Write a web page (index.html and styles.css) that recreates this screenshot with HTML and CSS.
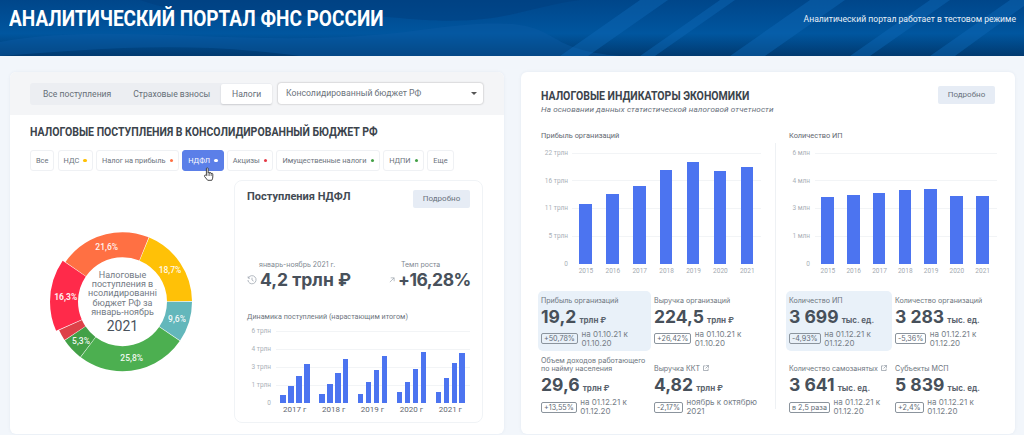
FILE: index.html
```html
<!DOCTYPE html>
<html lang="ru">
<head>
<meta charset="utf-8">
<title>Аналитический портал ФНС России</title>
<link rel="stylesheet" href="styles.css">
</head>
<body>
<header class="top">
  <svg class="top-bg" viewBox="0 0 1024 56" preserveAspectRatio="none" aria-hidden="true">
    <defs>
      <linearGradient id="hg" x1="0" y1="0" x2="0" y2="1">
        <stop offset="0" stop-color="#00468a"/><stop offset=".6" stop-color="#00569f"/><stop offset="1" stop-color="#013a70"/>
      </linearGradient>
    </defs>
    <rect width="1024" height="56" fill="url(#hg)"/>
    <path d="M0 42C120 20 260 52 420 30S520 48 620 56H300C180 40 90 50 0 56Z" fill="#0a5ba5" opacity=".45"/>
    <path d="M560 56L640 0H668L588 56ZM640 56L720 0H735L655 56ZM730 56L810 0H845L765 56ZM850 56L930 0H950L870 56ZM930 56L1010 0H1024V6L955 56Z" fill="#0d68b5" opacity=".45"/>
    <path d="M140 0C230 30 300 8 400 18S520 8 580 0Z" fill="#003d7e" opacity=".5"/>
  </svg>
  <h1 class="top-title">АНАЛИТИЧЕСКИЙ ПОРТАЛ ФНС РОССИИ</h1>
  <p class="top-note">Аналитический портал работает в тестовом режиме</p>
</header>

<main class="page">
  <section class="card card-left">
    <div class="toolbar">
      <div class="tabs">
        <span class="tab">Все поступления</span>
        <span class="tab">Страховые взносы</span>
        <span class="tab tab-active">Налоги</span>
      </div>
      <div class="select">Консолидированный бюджет РФ<i class="caret"></i></div>
    </div>
    <div class="left-body">
      <h2 class="left-title">НАЛОГОВЫЕ ПОСТУПЛЕНИЯ В КОНСОЛИДИРОВАННЫЙ БЮДЖЕТ РФ</h2>
      <div class="chips">
        <span class="chip">Все</span>
        <span class="chip">НДС<i class="dot dot-yellow"></i></span>
        <span class="chip">Налог на прибыль<i class="dot dot-orange"></i></span>
        <span class="chip chip-active">НДФЛ<i class="dot dot-white"></i>
          <svg class="hand" viewBox="0 0 12 15" aria-hidden="true"><path d="M3.4 8.6V1.7c0-1.2 1.7-1.2 1.7 0v4.2c0-1 1.6-1 1.6 0v.5c0-1 1.6-1 1.6 0v.6c0-.9 1.5-.9 1.5.1v2.9c0 1.5-.5 2.2-1 3.3H4.7L1.6 9.6c-.7-1 .5-2 1.3-1.3z" fill="#fff" stroke="#333" stroke-width=".9" stroke-linejoin="round"/><path d="M5.1 6v3M6.7 6.4v2.6M8.3 7v2" stroke="#333" stroke-width=".6"/></svg>
        </span>
        <span class="chip">Акцизы<i class="dot dot-red"></i></span>
        <span class="chip">Имущественные налоги<i class="dot dot-green"></i></span>
        <span class="chip">НДПИ<i class="dot dot-green"></i></span>
        <span class="chip">Еще</span>
      </div>
      <div class="split">
        <svg class="donut" viewBox="30 180 204 243" role="img">
          <g fill="none" stroke-width="25">
            <circle cx="122.5" cy="301.7" r="57" pathLength="100" stroke="#63b7bb" stroke-dasharray="9.45 90.55"/>
            <circle cx="122.5" cy="301.7" r="57" pathLength="100" stroke="#4caf50" stroke-dasharray="25.65 74.35" stroke-dashoffset="-9.6"/>
            <circle cx="122.5" cy="301.7" r="57" pathLength="100" stroke="#43a047" stroke-dasharray="5.15 94.85" stroke-dashoffset="-35.4"/>
            <circle cx="122.5" cy="301.7" r="57" pathLength="100" stroke="#dd4148" stroke-dasharray="2.55 97.45" stroke-dashoffset="-40.7"/>
            <circle cx="122.5" cy="301.7" r="58.5" pathLength="100" stroke="#ff2a4a" stroke-width="28" stroke-dasharray="16.15 83.85" stroke-dashoffset="-43.4"/>
            <circle cx="122.5" cy="301.7" r="57" pathLength="100" stroke="#ff7043" stroke-dasharray="21.45 78.55" stroke-dashoffset="-59.7"/>
            <circle cx="122.5" cy="301.7" r="57" pathLength="100" stroke="#ffc107" stroke-dasharray="18.55 81.45" stroke-dashoffset="-81.3"/>
          </g>
          <g class="pct">
            <text x="106.7" y="249.5">21,6%</text>
            <text x="170" y="273">18,7%</text>
            <text x="65.7" y="299.5" class="pct-strong">16,3%</text>
            <text x="177" y="322">9,6%</text>
            <text x="81" y="344">5,3%</text>
            <text x="131.7" y="361">25,8%</text>
          </g>
          <g class="center">
            <text x="122.5" y="278">Налоговые</text>
            <text x="122.5" y="287.2">поступления в</text>
            <text x="122.5" y="296.4">нсолидированні</text>
            <text x="122.5" y="305.6">бюджет РФ за</text>
            <text x="122.5" y="314.8">январь-ноябрь</text>
            <text x="122.5" y="331" class="center-year">2021</text>
          </g>
        </svg>

        <article class="inner">
          <div class="inner-head">
            <h3 class="inner-title">Поступления НДФЛ</h3>
            <span class="btn">Подробно</span>
          </div>
          <div class="kpis">
            <div class="kpi kpi-a">
              <span class="kpi-label">январь-ноябрь 2021 г.</span>
              <div class="kpi-line">
                <svg class="kpi-icon" viewBox="0 0 12 12" aria-hidden="true"><path d="M1.6 3.5A4.9 4.9 0 1 1 1.1 6M1.4 1.6v2.2h2.2M6 3.2V6l2 1.4" fill="none" stroke="#9aa3ac" stroke-width=".9"/></svg>
                <strong class="kpi-value">4,2 трлн ₽</strong>
              </div>
            </div>
            <div class="kpi kpi-b">
              <span class="kpi-label">Темп роста</span>
              <div class="kpi-line">
                <svg class="kpi-arrow" viewBox="0 0 7 7" aria-hidden="true"><path d="M1 6L6 1M2 1h4v4" fill="none" stroke="#9aa3ac" stroke-width=".8"/></svg>
                <strong class="kpi-value kpi-value-tight">+16,28%</strong>
              </div>
            </div>
          </div>
          <p class="mini-title">Динамика поступлений (нарастающим итогом)</p>
          <div class="chart chart-mini">
            <div class="plot">
              <div class="lines">
                <div class="gl"><span>6 трлн</span><i></i></div>
                <div class="gl"><span>4 трлн</span><i></i></div>
                <div class="gl"><span>3 трлн</span><i></i></div>
                <div class="gl"><span>1 трлн</span><i></i></div>
                <div class="gl"><span>0</span><i class="none"></i></div>
              </div>
              <div class="bars">
                <div class="grp"><b style="height:7.7px"></b><b style="height:17.3px"></b><b style="height:27px"></b><b style="height:39px"></b></div>
                <div class="grp"><b style="height:8.7px"></b><b style="height:19.3px"></b><b style="height:30.3px"></b><b style="height:43.7px"></b></div>
                <div class="grp"><b style="height:9.3px"></b><b style="height:21px"></b><b style="height:33px"></b><b style="height:47.3px"></b></div>
                <div class="grp"><b style="height:10.7px"></b><b style="height:21px"></b><b style="height:34px"></b><b style="height:51px"></b></div>
                <div class="grp"><b style="height:11px"></b><b style="height:25px"></b><b style="height:39.7px"></b><b style="height:49.7px"></b></div>
              </div>
            </div>
            <div class="years"><span>2017 г</span><span>2018 г</span><span>2019 г</span><span>2020 г</span><span>2021 г</span></div>
          </div>
        </article>
      </div>
    </div>
  </section>

  <section class="card card-right">
    <div class="right-head">
      <div>
        <h2 class="right-title">НАЛОГОВЫЕ ИНДИКАТОРЫ ЭКОНОМИКИ</h2>
        <p class="right-sub">На основании данных статистической налоговой отчетности</p>
      </div>
      <span class="btn">Подробно</span>
    </div>
    <div class="cols">
      <div class="col col-a">
        <p class="chart-title">Прибыль организаций</p>
        <div class="chart chart-a">
          <div class="plot">
            <div class="lines">
              <div class="gl"><span>22 трлн</span><i></i></div>
              <div class="gl"><span>16 трлн</span><i></i></div>
              <div class="gl"><span>11 трлн</span><i></i></div>
              <div class="gl"><span>5 трлн</span><i></i></div>
              <div class="gl"><span>0</span><i class="none"></i></div>
            </div>
            <div class="bars">
              <b style="height:59.3px"></b><b style="height:69.3px"></b><b style="height:77.3px"></b><b style="height:94px"></b><b style="height:101.3px"></b><b style="height:92.7px"></b><b style="height:96.3px"></b>
            </div>
          </div>
          <div class="years"><span>2015</span><span>2016</span><span>2017</span><span>2018</span><span>2019</span><span>2020</span><span>2021</span></div>
        </div>
        <div class="tiles tiles-a">
          <div class="tile tile-on">
            <p class="t-label">Прибыль организаций</p>
            <p class="t-val">19,2 <small>трлн ₽</small></p>
            <div class="t-foot"><span class="delta">+50,78%</span><span class="t-note">на 01.10.21 к 01.10.20</span></div>
          </div>
          <div class="tile">
            <p class="t-label">Выручка организаций</p>
            <p class="t-val">224,5 <small>трлн ₽</small></p>
            <div class="t-foot"><span class="delta">+26,42%</span><span class="t-note">на 01.10.21 к 01.10.20</span></div>
          </div>
          <div class="tile">
            <p class="t-label t-two">Объем доходов работающего по найму населения</p>
            <p class="t-val">29,6 <small>трлн ₽</small></p>
            <div class="t-foot"><span class="delta">+13,55%</span><span class="t-note">на 01.12.21 к 01.12.20</span></div>
          </div>
          <div class="tile">
            <p class="t-label t-two t-end">Выручка ККТ<svg class="ext" viewBox="0 0 7 7" aria-hidden="true"><path d="M3 1H.6v5.4H6V4M3.6.5h2.9v2.9M6.3.7L3 4" fill="none" stroke="#79838e" stroke-width=".7"/></svg></p>
            <p class="t-val">4,82 <small>трлн ₽</small></p>
            <div class="t-foot"><span class="delta">-2,17%</span><span class="t-note">ноябрь к октябрю 2021</span></div>
          </div>
        </div>
      </div>
      <div class="col col-b">
        <p class="chart-title">Количество ИП</p>
        <div class="chart chart-b">
          <div class="plot">
            <div class="lines">
              <div class="gl"><span>6 млн</span><i></i></div>
              <div class="gl"><span>4 млн</span><i></i></div>
              <div class="gl"><span>3 млн</span><i></i></div>
              <div class="gl"><span>1 млн</span><i></i></div>
              <div class="gl"><span>0</span><i class="none"></i></div>
            </div>
            <div class="bars">
              <b style="height:67px"></b><b style="height:68.7px"></b><b style="height:71px"></b><b style="height:73.3px"></b><b style="height:74.7px"></b><b style="height:68px"></b><b style="height:68px"></b>
            </div>
          </div>
          <div class="years"><span>2015</span><span>2016</span><span>2017</span><span>2018</span><span>2019</span><span>2020</span><span>2021</span></div>
        </div>
        <div class="tiles tiles-b">
          <div class="tile tile-on">
            <p class="t-label">Количество ИП</p>
            <p class="t-val">3 699 <small>тыс. ед.</small></p>
            <div class="t-foot"><span class="delta">-4,93%</span><span class="t-note">на 01.12.21 к 01.12.20</span></div>
          </div>
          <div class="tile">
            <p class="t-label">Количество организаций</p>
            <p class="t-val">3 283 <small>тыс. ед.</small></p>
            <div class="t-foot"><span class="delta">-5,36%</span><span class="t-note">на 01.12.21 к 01.12.20</span></div>
          </div>
          <div class="tile">
            <p class="t-label t-two t-end">Количество самозанятых<svg class="ext" viewBox="0 0 7 7" aria-hidden="true"><path d="M3 1H.6v5.4H6V4M3.6.5h2.9v2.9M6.3.7L3 4" fill="none" stroke="#79838e" stroke-width=".7"/></svg></p>
            <p class="t-val">3 641 <small>тыс. ед.</small></p>
            <div class="t-foot"><span class="delta">в 2,5 раза</span><span class="t-note">на 01.12.21 к 01.12.20</span></div>
          </div>
          <div class="tile">
            <p class="t-label t-two t-end">Субъекты МСП</p>
            <p class="t-val">5 839 <small>тыс. ед.</small></p>
            <div class="t-foot"><span class="delta">+2,4%</span><span class="t-note">на 01.12.21 к 01.12.20</span></div>
          </div>
        </div>
      </div>
    </div>
  </section>
</main>
</body>
</html>
```

FILE: styles.css
```css
* { box-sizing: border-box; }
html, body { margin: 0; height: 435px; overflow: hidden; }
body { background: #f2f6fb; font-family: Roboto, "Liberation Sans", sans-serif; color: #5f6973; }
h1, h2, h3, p { margin: 0; }
i { font-style: normal; }

.top { position: relative; height: 56px; display: flex; justify-content: space-between; padding: 0 8px 0 9px; color: #fff; overflow: hidden; }
.top-bg { position: absolute; inset: 0; width: 100%; height: 100%; }
.top-title { position: relative; font-size: 22px; line-height: 24px; margin-top: 7px; font-weight: 700; white-space: nowrap; transform: scaleX(.865); transform-origin: left center; }
.top-note { position: relative; font-size: 8.6px; line-height: 12px; margin-top: 13px; color: #e8f0f8; white-space: nowrap; }

.page { display: flex; gap: 17px; padding: 16px 9px 0 10px; }
.card { width: 494px; height: 362px; background: #fff; border-radius: 6px; overflow: hidden; box-shadow: 0 0 3px rgba(120,140,170,.12); }

.toolbar { height: 43px; background: #f4f5f7; display: flex; gap: 6px; padding: 11px 21px 0 20px; }
.tabs { display: flex; flex: none; height: 22px; width: 242px; background: #eceef2; border-radius: 3px; font-size: 8.6px; padding-left: 13px; align-items: center; color: #666e77; }
.tab { margin-right: 22px; white-space: nowrap; flex: none; }
.tab-active { margin: 0 0 0 -11px; background: #fff; height: 20px; width: 51px; text-align: center; line-height: 20px; border-radius: 2px; box-shadow: 0 1px 2px rgba(0,0,0,.14); }
.select { position: relative; flex: none; width: 205px; height: 21px; background: #fff; border-radius: 3px; box-shadow: 0 0 2px rgba(0,0,0,.35); font-size: 8.7px; line-height: 21px; padding-left: 8px; color: #6a727b; }
.caret { position: absolute; right: 6px; top: 9px; border: 3px solid transparent; border-top: 3px solid #555; border-bottom: 0; }

.left-body { padding: 0 20px; }
.left-title { font-size: 12.5px; line-height: 14px; margin-top: 10px; font-weight: 700; color: #3c444c; white-space: nowrap; transform: scaleX(.843); transform-origin: left center; }
.chips { display: flex; gap: 3.2px; margin-top: 11px; height: 21px; }
.chip { position: relative; display: flex; align-items: center; flex: none; height: 21px; padding: 0 5px; font-size: 7.4px; background: #fff; border: 1px solid #eff1f4; border-radius: 3px; white-space: nowrap; color: #6b737c; }
.chip-active { background: #5b7fe8; border-color: #5b7fe8; color: #fff; }
.dot { width: 3.5px; height: 3.5px; border-radius: 50%; margin-left: 4px; }
.dot-yellow { background: #ffc107; }
.dot-orange { background: #ff7043; }
.dot-red { background: #e53945; }
.dot-green { background: #43a047; }
.dot-white { background: #fff; }
.hand { position: absolute; left: 20px; top: 16px; width: 12px; height: 15px; }

.split { display: flex; margin-top: 9px; }
.donut { flex: none; width: 204px; height: 243px; }
.pct text { font-size: 8.5px; fill: #fff; text-anchor: middle; opacity: .92; font-weight: 500; }
.pct .pct-strong { font-weight: 700; }
.center text { font-size: 9px; fill: #727a84; text-anchor: middle; }
.center .center-year { font-size: 14px; fill: #4a525c; }

.inner { width: 249px; height: 243px; border: 1px solid #f0f3f6; border-radius: 8px; padding: 9px 12px; }
.inner-head { display: flex; justify-content: space-between; }
.inner-title { font-size: 11px; line-height: 14px; font-weight: 700; color: #434b54; white-space: nowrap; }
.btn { width: 57px; height: 18px; background: #e6ecf5; border-radius: 2px; font-size: 8px; line-height: 18px; text-align: center; color: #69727c; flex: none; }

.kpis { display: flex; margin-top: 52px; font-family: Inter, Roboto, sans-serif; }
.kpi-a { width: 142px; flex: none; }
.kpi-label { display: block; font-size: 7px; line-height: 9px; color: #808891; white-space: nowrap; }
.kpi-a .kpi-label { margin-left: 12px; }
.kpi-b .kpi-label { margin-left: 12px; }
.kpi-line { display: flex; align-items: center; gap: 3px; height: 21px; }
.kpi-icon { width: 10px; height: 10px; flex: none; }
.kpi-arrow { width: 6px; height: 6px; flex: none; }
.kpi-value { font-size: 17.5px; font-weight: 700; color: #48515b; white-space: nowrap; }
.kpi-value-tight { letter-spacing: -.5px; }

.mini-title { font-size: 7.2px; line-height: 10px; margin-top: 22px; color: #6d757e; white-space: nowrap; }

.plot { display: grid; }
.lines, .bars { grid-area: 1 / 1; }
.lines { display: flex; flex-direction: column; justify-content: space-between; }
.gl { display: flex; align-items: center; height: 0; }
.gl span { text-align: right; font-size: 6.5px; color: #aab0b7; white-space: nowrap; }
.gl i { flex: 1; height: 1px; background: #f2f4f6; }
.gl i.none { background: transparent; }
.bars { display: flex; align-items: flex-end; }
.bars b { display: block; background: #4c74f0; }
.years { display: flex; font-size: 6.5px; color: #a3a9b0; }
.years span { text-align: center; flex: none; }

.chart-mini { margin-top: 9px; }
.chart-mini .plot { height: 72px; }
.chart-mini .gl span { width: 24px; margin-right: 5px; }
.chart-mini .bars { padding-left: 33px; gap: 9.3px; }
.grp { display: flex; align-items: flex-end; gap: 2.3px; height: 100%; width: 29.6px; flex: none; }
.grp b { width: 5.7px; }
.chart-mini .years { padding-left: 28.3px; font-size: 8px; color: #5f6770; margin-top: 1px; line-height: 12px; }
.chart-mini .years span { width: 38.9px; }

.right-head { display: flex; justify-content: space-between; padding: 14px 20px 0; height: 59px; }
.right-title { font-size: 13px; line-height: 17px; font-weight: 700; color: #3c444c; margin-top: 1px; white-space: nowrap; transform: scaleX(.81); transform-origin: left center; }
.right-sub { font-size: 8.1px; line-height: 11px; font-style: italic; color: #6a727c; white-space: nowrap; letter-spacing: .1px; }

.cols { display: flex; }
.col { flex: none; }
.col-a { width: 254px; padding-left: 20px; }
.col-b { width: 240px; padding-left: 14px; position: relative; }
.col-b::before { content: ""; position: absolute; left: 0; top: 12px; bottom: 14px; width: 1px; background: #eef1f4; }
.chart-title { font-size: 7.4px; line-height: 10px; color: #5f6770; white-space: nowrap; }

.chart-a { margin-top: 12px; }
.chart-a .plot, .chart-b .plot { height: 110.7px; }
.chart-a .gl span { width: 27px; margin-right: 4px; }
.chart-a .gl { margin-right: 14px; }
.chart-a .bars { padding-left: 38.3px; gap: 14.4px; }
.bars > b { width: 12.5px; flex: none; }
.chart-a .years { padding-left: 31.5px; margin-top: 3px; line-height: 9px; }
.chart-a .years span { width: 26.9px; }

.chart-b { margin-top: 12px; }
.chart-b .gl span { width: 21px; margin-right: 5px; }
.chart-b .gl { margin-right: 18px; }
.chart-b .bars { padding-left: 32.3px; gap: 13.3px; }
.chart-b .years { padding-left: 26px; margin-top: 3px; line-height: 9px; }
.chart-b .years span { width: 25.8px; }

.tiles { display: grid; grid-template-rows: 60px 72px; margin-top: 15px; font-family: Inter, Roboto, sans-serif; }
.tiles-a { grid-template-columns: 113px 113px; margin-left: -3px; }
.tiles-b { grid-template-columns: 106px 115px; margin-left: -3px; }
.tile { padding: 6px 3px 0; border-radius: 5px; min-width: 0; }
.tile-on { background: #e9f1f9; }
.t-label { font-size: 7.1px; line-height: 8.5px; color: #6d757e; white-space: nowrap; }
.t-two { white-space: normal; height: 17px; }
.t-end { display: flex; align-items: flex-end; white-space: nowrap; }
.ext { width: 6px; height: 6px; margin: 0 0 3px 3px; flex: none; }
.t-val { font-size: 17.5px; line-height: 22px; font-weight: 700; color: #47505a; white-space: nowrap; margin-top: .5px; }
.t-val small { font-size: 8px; font-weight: 700; margin-left: -1px; color: #5b646e; }
.t-foot { display: flex; gap: 3.5px; align-items: center; margin-top: -1px; }
.delta { flex: none; border: 1px solid #8b949d; border-radius: 2px; font-size: 7.2px; line-height: 9px; padding: 0 2px; color: #626b75; }
.t-note { font-size: 8px; line-height: 9px; color: #767e87; }
```
